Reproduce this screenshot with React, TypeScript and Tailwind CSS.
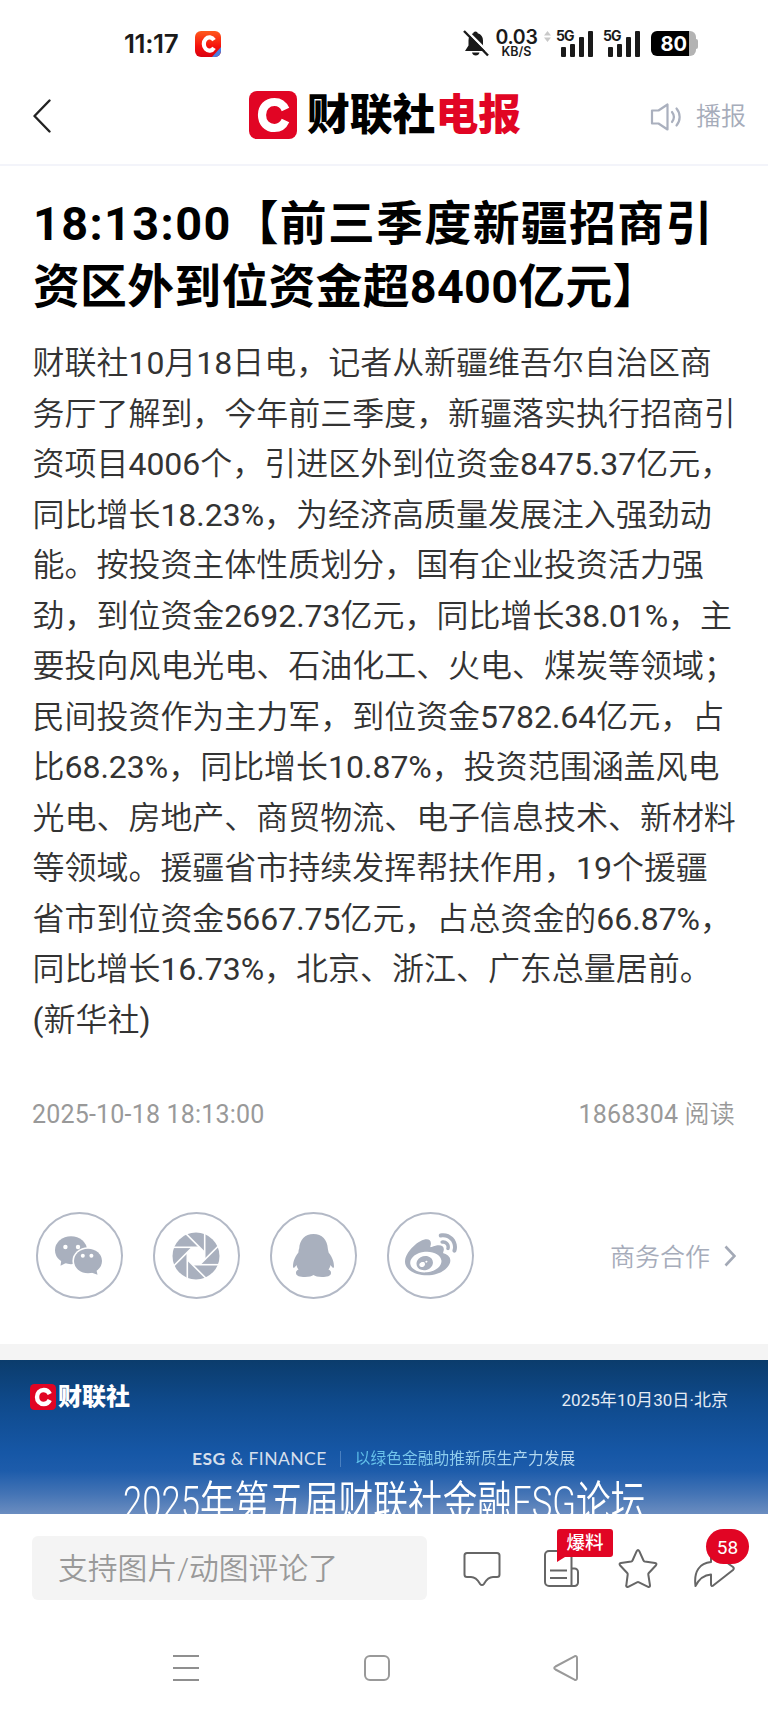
import { FaWeibo } from "react-icons/fa";
import type { ReactNode } from "react";

const TITLE = [
  { text: "18:13:00【前三季度新疆招商引", cls: "tracking-[1.4px]" },
  { text: "资区外到位资金超8400亿元】", cls: "tracking-[0.3px]" },
];

const BODY = [
  "财联社10月18日电，记者从新疆维吾尔自治区商",
  "务厅了解到，今年前三季度，新疆落实执行招商引",
  "资项目4006个，引进区外到位资金8475.37亿元，",
  "同比增长18.23%，为经济高质量发展注入强劲动",
  "能。按投资主体性质划分，国有企业投资活力强",
  "劲，到位资金2692.73亿元，同比增长38.01%，主",
  "要投向风电光电、石油化工、火电、煤炭等领域；",
  "民间投资作为主力军，到位资金5782.64亿元，占",
  "比68.23%，同比增长10.87%，投资范围涵盖风电",
  "光电、房地产、商贸物流、电子信息技术、新材料",
  "等领域。援疆省市持续发挥帮扶作用，19个援疆",
  "省市到位资金5667.75亿元，占总资金的66.87%，",
  "同比增长16.73%，北京、浙江、广东总量居前。",
  "(新华社)",
];

/** Sets Latin runs in regular weight beside the lighter Chinese text. */
function Mixed({ text }: { text: string }) {
  return (
    <>
      {text.split(/([\x21-\x7e]+)/).map((part, i) =>
        i % 2 ? <span key={i} className="font-normal">{part}</span> : part,
      )}
    </>
  );
}

function Signal() {
  return (
    <div className="relative flex h-[27px] w-[38px] items-end justify-end gap-[4px]">
      <span className="absolute left-[1px] top-[-1px] font-['Inter'] text-[14px] font-bold leading-[13px] tracking-[-1px]">5G</span>
      <span className="h-[10px] w-[5px] rounded-[1px] bg-[#1a1a1a]" />
      <span className="h-[13px] w-[5px] rounded-[1px] bg-[#1a1a1a]" />
      <span className="h-[20px] w-[5px] rounded-[1px] bg-[#1a1a1a]" />
      <span className="h-[26px] w-[5px] rounded-[1px] bg-[#1a1a1a]" />
    </div>
  );
}

function StatusBar() {
  return (
    <div className="flex h-[80px] items-center pt-[7px] pl-[124px] pr-[70px] text-[#1a1a1a]">
      <span className="w-[71px] whitespace-nowrap font-['Inter'] text-[26px] font-semibold leading-none tracking-[-0.4px]">11:17</span>
      <svg className="size-[26px]" viewBox="0 0 26 26">
        <defs>
          <linearGradient id="app" x1="0" y1="0" x2="0" y2="1">
            <stop offset="0" stopColor="#ff5a1c" />
            <stop offset="0.6" stopColor="#f5100c" />
            <stop offset="1" stopColor="#d90010" />
          </linearGradient>
        </defs>
        <rect width="26" height="26" rx="6" fill="url(#app)" />
        <path d="M17 26 26 16v4a6 6 0 0 1-6 6z" fill="#4a7fe0" />
        <path d="M19 9.200A5.600 6.600 0 1 0 19 16.800" fill="none" stroke="#fff" strokeWidth="4.200" />
      </svg>
      <div className="ml-auto flex items-center">
        <svg className="mr-[7px] h-[27px] w-[26px]" viewBox="0 0 26 27">
          <path d="M12.5 1.5c1.3 0 2 .8 2.2 1.8 3.500.9 5.300 3.700 5.300 7.200v5l3.500 5.500H2l3.500-5.500v-5c0-3.500 1.500-6.300 4.800-7.200.2-1 .9-1.800 2.200-1.800zM9 22.500h7.500c-.4 1.800-1.800 3-3.700 3s-3.400-1.200-3.800-3z" fill="#1a1a1a" />
          <path d="M2.500-.5 26.500 23.500" stroke="#fff" strokeWidth="2.500" />
          <path d="M1 1 25 25.500" stroke="#1a1a1a" strokeWidth="2.400" />
        </svg>
        <div className="flex w-[41px] flex-col items-center font-['Inter'] font-semibold leading-none">
          <span className="text-[19.500px] leading-[15px] tracking-[-0.3px]">0.03</span>
          <span className="text-[12.500px] leading-[13px]">KB/S</span>
        </div>
        <svg className="ml-[7px] mr-[4px] mb-[14px] h-[12px] w-[7px]" viewBox="0 0 7 12">
          <path d="M3.500 0 7 4.500H0zM3.500 11 7 6.500H0z" fill="#c9c9c9" />
        </svg>
        <Signal />
        <div className="w-[9px]" />
        <Signal />
        <div className="ml-[11px] flex items-center">
          <div className="flex h-[25px] w-[38px] items-center justify-end rounded-l-[6px] bg-black pr-[2px] font-['Inter'] text-[20px] font-bold leading-none text-white">80</div>
          <div className="h-[25px] w-[7px] rounded-r-[6px] bg-[#b3b3b3]" />
          <div className="h-[10px] w-[2px] rounded-r-[2px] bg-[#b3b3b3]" />
        </div>
      </div>
    </div>
  );
}

function BrandMark({ className }: { className: string }) {
  return (
    <svg className={className} viewBox="0 0 48 48">
      <rect width="48" height="48" rx="8" fill="#e10524" />
      <path d="M36.500 18.500C34 13 30 11 25.500 11c-7.500 0-12.500 5.500-12.500 13s5 13 12.500 13c4.500 0 8.500-2 11-7.500" fill="none" stroke="#fff" strokeWidth="8.200" />
    </svg>
  );
}

function Header() {
  return (
    <div className="flex h-[86px] items-center border-b-[2px] border-[#f3f4fa] pb-[11px] pl-[32px] pr-[22px]">
      <svg className="mt-[-1px] h-[34px] w-[20px]" viewBox="0 0 20 34" fill="none" stroke="#222" strokeWidth="2.400" strokeLinecap="round" strokeLinejoin="round">
        <path d="M17.500 1.500 2.500 17 17.500 32.500" />
      </svg>
      <div className="ml-[197px] mt-[-4px] flex items-center">
        <BrandMark className="size-[48px]" />
        <span className="ml-[10px] whitespace-nowrap text-[42.800px] font-black leading-[48px] text-black">
          财联社<span className="text-[#e10524]">电报</span>
        </span>
      </div>
      <div className="ml-auto flex items-center gap-[14px] text-[25px] font-[350] leading-none text-[#a6acba]">
        <svg className="h-[28px] w-[32px]" viewBox="0 0 32 28" fill="none" stroke="#aab0be" strokeWidth="2.200" strokeLinejoin="round" strokeLinecap="round">
          <path d="M2 7.500h6.500L17.500 1.500v25L8.500 20.500H2z" />
          <path d="M22 9c2.300 3 2.300 7 0 10M26.500 5.500c4.200 5 4.200 12 0 17" />
        </svg>
        <span>播报</span>
      </div>
    </div>
  );
}

function Ring({ children }: { children: ReactNode }) {
  return <div className="flex size-[87px] items-center justify-center rounded-full border-2 border-[#b3b9c6] text-[#a9b0be]">{children}</div>;
}

function ChatBubbles() {
  return (
    <svg className="h-[39px] w-[48px]" viewBox="0 0 48 39">
      <ellipse cx="16" cy="14.200" rx="16" ry="14" fill="currentColor" />
      <path d="M6.500 23 5.500 29.800 13 26z" fill="currentColor" />
      <ellipse cx="33" cy="25" rx="15.600" ry="13.700" fill="#fff" />
      <ellipse cx="33" cy="25" rx="14" ry="12.200" fill="currentColor" />
      <path d="M35 36 42.500 38.800 41 32z" fill="currentColor" />
      <g fill="#fff">
        <circle cx="10.400" cy="11" r="2.200" />
        <circle cx="23" cy="11" r="2.200" />
        <circle cx="27.800" cy="19.800" r="2" />
        <circle cx="36.400" cy="19.800" r="2" />
      </g>
    </svg>
  );
}

function Penguin() {
  return (
    <svg className="h-[43px] w-[41px]" viewBox="0 0 41 43">
      <path
        fill="currentColor"
        d="M20.500 0C29 0 34.500 6 34.800 14.500c.1 1 .6 2 .8 4C40 24 41 29 41 33c0 1.500-1.500 1-3.500-2-.3 2-1 3-2 4.500 2 1 2.500 2 2.500 3.500 0 3-4 4-9 4-4 0-7-.8-8.500-2-1.500 1.200-4.500 2-8.500 2-5 0-9-1-9-4 0-1.500.5-2.500 2.500-3.500-1-1.500-1.700-2.500-2-4.500C1.500 34 0 34.500 0 33c0-4 1-9 5.400-14.500.1-1.500.3-3 .8-4C6.500 6 12 0 20.500 0z"
      />
    </svg>
  );
}

function Aperture() {
  return (
    <svg className="size-[48px]" viewBox="-24 -24 48 48">
      <circle r="23.500" fill="currentColor" />
      <path d="M-3.500-8.500H3.500L8.500-3.500V3.500L3.500 8.500H-3.500L-8.500 3.500V-3.500z" fill="#fff" />
      {[0, 45, 90, 135, 180, 225, 270, 315].map((angle) => (
        <path key={angle} d="M8.700 3.500V-25" transform={`rotate(${angle})`} stroke="#fff" strokeWidth="1.600" />
      ))}
    </svg>
  );
}

function ShareRow() {
  return (
    <div className="flex h-[87px] items-center pl-[35.500px] pr-[32px]">
      <div className="flex gap-[30.300px]">
        <Ring><ChatBubbles /></Ring>
        <Ring><Aperture /></Ring>
        <Ring><Penguin /></Ring>
        <Ring><FaWeibo className="size-[52px]" /></Ring>
      </div>
      <div className="ml-auto flex items-center pt-[3px] text-[25px] font-[350] leading-none text-[#a6acba]">
        <span>商务合作</span>
        <svg className="ml-[14px] mt-[-2px] h-[22px] w-[12px]" viewBox="0 0 12 22" fill="none" stroke="#a3a9b6" strokeWidth="2.600">
          <path d="M1.500 1.500 10.500 11l-9 9.500" />
        </svg>
      </div>
    </div>
  );
}

function Banner() {
  return (
    <div className="h-[154px] overflow-hidden bg-[linear-gradient(180deg,#0b3c6c_0%,#0f4a8c_28%,#1657a6_60%,#1d5cab_72%,#4474b5_87%,#6b8dc0_100%)] text-white">
      <div className="flex items-center pl-[30px] pr-[40px] pt-[22px]">
        <BrandMark className="size-[26px]" />
        <span className="ml-[2px] text-[24px] font-black leading-[28px]">财联社</span>
        <span className="ml-auto mt-[6px] text-[17px] leading-[24px] tracking-[0.050px] text-[#e4ebf4]">2025年10月30日·北京</span>
      </div>
      <div className="mt-[35px] flex h-[24px] items-center pl-[192px]">
        <span className="whitespace-nowrap font-['Lato'] text-[17.500px] leading-none tracking-[0.450px] text-[#d5dfec]"><b>ESG</b> &amp; FINANCE</span>
        <span className="ml-[13px] h-[16px] w-px bg-[#4a80c0]" />
        <span className="ml-[14px] whitespace-nowrap bg-linear-to-r from-[#5cc0ea] to-[#c4def0] bg-clip-text text-[15.750px] leading-[24px] text-transparent">以绿色金融助推新质生产力发展</span>
      </div>
      <div className="ml-[123px] mt-[2px] origin-left scale-x-[0.788] whitespace-nowrap text-[44px] font-[350] leading-[60px]">2025年第五届财联社金融ESG论坛</div>
    </div>
  );
}

function BottomBar() {
  return (
    <div className="flex h-[108px] items-center pl-[32px]">
      <div className="flex h-[64px] w-[395px] items-center rounded-[6px] bg-[#f4f4f4] pl-[26px] pt-[2px] text-[29.800px] font-[350] leading-none text-[#999]">支持图片/动图评论了</div>
      <svg className="ml-[35px] mt-[2px] size-[40px]" viewBox="0 0 40 40" fill="none" stroke="#666" strokeWidth="2" strokeLinejoin="round">
        <path d="M5 4H35a2.500 2.500 0 0 1 2.500 2.500V25.500A2.500 2.500 0 0 1 35 28H31c-4.500 0-6.500 2.500-9 6.800q-2 2.500-4 0C15.500 30.500 13.500 28 9 28H5A2.500 2.500 0 0 1 2.500 25.500V6.500A2.500 2.500 0 0 1 5 4z" />
      </svg>
      <div className="relative ml-[41px] mt-[2px] h-[40px] w-[38px]">
        <svg className="size-full" viewBox="0 0 38 40" fill="none" stroke="#666" strokeWidth="2">
          <path d="M29 37H6a4 4 0 0 1-4-4V6a4 4 0 0 1 4-4H28.500V37H31.500a3.500 3.500 0 0 0 3.500-3.500V23a3.500 3.500 0 0 0-3.500-3.500H28.500M7 21.500H24M7 29H24" />
        </svg>
        <svg className="absolute left-[14px] top-[-20px] h-[34px] w-[56px]" viewBox="0 0 56 34">
          <path d="M3 0H53a3 3 0 0 1 3 3V25a3 3 0 0 1-3 3H8L0 33V3A3 3 0 0 1 3 0z" fill="#e10524" />
        </svg>
        <span className="absolute left-[14px] top-[-20px] w-[56px] text-center text-[18.500px] font-medium leading-[29px] text-white">爆料</span>
      </div>
      <svg className="ml-[36px] mt-[2px] size-[42px]" viewBox="0 0 42 42" fill="none" stroke="#666" strokeWidth="2" strokeLinejoin="round">
        <path d="M19.700 3.200q1.300-2.200 2.600 0L26.500 12.500q.4.800 1.300 1L38 15q2.400.6.800 2.500L31.800 25q-.6.700-.5 1.500L33 37.300q.1 2.200-1.900 1.500L22 34.300q-1-.5-2 0L11.200 38.800Q8.900 39.500 9.300 37.300L10.700 26.500q.1-.8-.5-1.500L3.200 17.500Q1.600 15.600 4 15l10.200-1.500q.9-.2 1.300-1z" />
      </svg>
      <div className="relative ml-[34px] mt-[2px] h-[42px] w-[44px]">
        <svg className="size-full" viewBox="0 0 44 42" fill="none" stroke="#666" strokeWidth="2" strokeLinejoin="round">
          <path d="M18 26.500v9.500q0 3 2.500 1.300L40 22q1.500-1.500 0-3L20.500 5Q18 3.500 18 6v8C7 15 .5 23 2.500 38 6 31 11 27 18 26.500z" />
        </svg>
        <span className="absolute left-[13px] top-[-19px] flex h-[35px] w-[43px] items-center justify-center rounded-full bg-[#e10524] pt-[1px] text-[19px] leading-none text-white">58</span>
      </div>
    </div>
  );
}

function SystemNav() {
  return (
    <div className="flex h-[94px] items-center pb-[3px] pl-[172px]">
      <svg className="h-[28px] w-[28px]" viewBox="0 0 28 28" stroke="#8f8f8f" strokeWidth="2">
        <path d="M1 2H27M1 14H27M1 26H27" />
      </svg>
      <svg className="ml-[163px] h-[28px] w-[28px]" viewBox="0 0 28 28" fill="none" stroke="#999" strokeWidth="2">
        <rect x="2" y="2" width="24" height="24" rx="5" />
      </svg>
      <svg className="ml-[161px] h-[28px] w-[28px]" viewBox="0 0 28 28" fill="none" stroke="#999" strokeWidth="2" strokeLinejoin="round">
        <path d="M3.500 12.500 22.500 2.300Q25 1.500 25 4V24q0 2.500-2.500 1.700L3.500 15.500q-2.500-1.500 0-3z" />
      </svg>
    </div>
  );
}

export default function App() {
  return (
    <div className="flex h-[1716px] w-[768px] flex-col overflow-hidden bg-white font-['Roboto','Noto_Sans_CJK_SC',sans-serif]">
      <StatusBar />
      <Header />
      <h1 className="h-[154px] pl-[33px] pt-[27px] text-[46.800px] font-bold leading-[63px] text-black">
        {TITLE.map((line) => (
          <span key={line.text} className={`block whitespace-nowrap ${line.cls}`}>{line.text}</span>
        ))}
      </h1>
      <div className="h-[756px] pl-[32.500px] pt-[18px] text-[31.970px] font-[350] leading-[50.500px] text-[#333]">
        {BODY.map((line) => (
          <span key={line} className="block whitespace-nowrap"><Mixed text={line} /></span>
        ))}
      </div>
      <div className="flex h-[136px] justify-between pl-[32px] pr-[33px] pt-[19px] text-[25px] font-[350] leading-[40px] tracking-[0.200px] text-[#999]">
        <span><Mixed text="2025-10-18 18:13:00" /></span>
        <span><Mixed text="1868304 阅读" /></span>
      </div>
      <div className="h-[132px]"><ShareRow /></div>
      <div className="h-[16px] bg-[#f4f4f4]" />
      <Banner />
      <BottomBar />
      <SystemNav />
    </div>
  );
}
